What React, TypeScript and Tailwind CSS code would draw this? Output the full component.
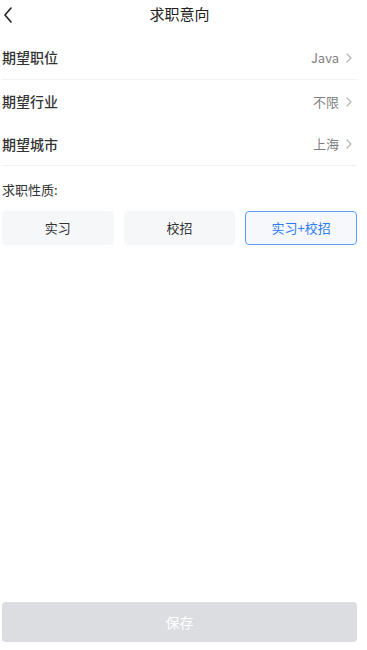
import React, { useState } from "react";

const font = { fontFamily: '"Noto Sans CJK SC", "Noto Sans", sans-serif' };

const Chevron = () => (
  <svg width="6" height="10" viewBox="0 0 6 10" className="ml-[7px]">
    <path d="M1 1l4 4-4 4" fill="none" stroke="#b5b5b5" strokeWidth="1.2" strokeLinecap="round" strokeLinejoin="round" />
  </svg>
);

const Row = ({ label, value, className }: { label: string; value: string; className: string }) => (
  <div className={`flex items-center justify-between pr-[5px] ${className}`}>
    <span className="text-[14px] font-medium text-[#333]">{label}</span>
    <span className="flex items-center text-[13px] text-[#808080]">
      {value}
      <Chevron />
    </span>
  </div>
);

const options = ["实习", "校招", "实习+校招"];

export default function App() {
  const [picked, setPicked] = useState(2);

  return (
    <div style={font} className="bg-white min-h-[650px] w-[355px] ml-[2px] flex flex-col">
      <div className="relative h-9 flex items-center justify-center">
        <svg width="10" height="16" viewBox="0 0 10 16" className="absolute left-[1px] top-[7px]">
          <path d="M8 1L2 8l6 7" fill="none" stroke="#222" strokeWidth="1.6" strokeLinecap="round" strokeLinejoin="round" />
        </svg>
        <span className="text-[15px] text-[#222] -mt-[7px]">求职意向</span>
      </div>

      <Row label="期望职位" value="Java" className="h-[44px] border-b border-[#f2f2f2]" />
      <Row label="期望行业" value="不限" className="h-[43px]" />
      <Row label="期望城市" value="上海" className="h-[43px] border-b border-[#f2f2f2]" />

      <div className="mt-[14px] text-[13px] text-[#333]">求职性质:</div>

      <div className="grid grid-cols-3 gap-[10px] mt-[11px]">
        {options.map((o, i) => (
          <button
            key={o}
            onClick={() => setPicked(i)}
            className={
              i === picked
                ? "h-[34px] rounded-[4px] bg-[#f6f8fb] border border-[#5b9cf7] text-[13px] text-[#2f7cf6]"
                : "h-[34px] rounded-[4px] bg-[#f6f7f9] border border-[#f6f7f9] text-[13px] text-[#333]"
            }
          >
            {o}
          </button>
        ))}
      </div>

      <button className="mt-auto mb-[8px] h-[40px] w-full rounded-[4px] bg-[#dcdde1] text-[14px] text-white">
        保存
      </button>
    </div>
  );
}
